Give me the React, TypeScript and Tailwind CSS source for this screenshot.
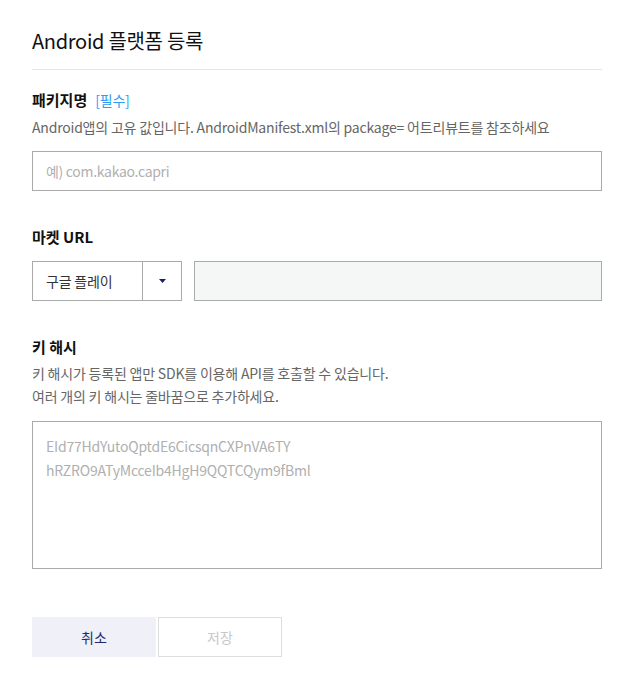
const font = { fontFamily: '"Noto Sans CJK KR", "Noto Sans", sans-serif' };

export default function App() {
  return (
    <div className="min-h-[676px] bg-white px-8 pt-[26px] text-[#222]" style={font}>
      <h1 className="text-[20px] leading-[30px] font-normal tracking-[-0.3px] text-[#111]">
        Android 플랫폼 등록
      </h1>
      <div className="mt-[13px] h-px w-[570px] bg-[#e5e5e5]" />

      <section className="mt-[19px]">
        <div className="flex items-baseline gap-[8px]">
          <span className="text-[15px] font-bold leading-[22px] text-[#111]">패키지명</span>
          <span className="text-[14px] tracking-[-0.2px] text-[#2e9cf2]">[필수]</span>
        </div>
        <p className="mt-[6px] text-[14px] leading-[20px] tracking-[-0.2px] text-[#666]">
          Android앱의 고유 값입니다. AndroidManifest.xml의 package= 어트리뷰트를 참조하세요
        </p>
        <input
          className="mt-[14px] h-[40px] w-[570px] border border-[#aaa] px-[13px] text-[14px] tracking-[-0.3px] outline-none placeholder:text-[#b0b0b0]"
          placeholder="예) com.kakao.capri"
        />
      </section>

      <section className="mt-[35px]">
        <div className="text-[15px] font-bold leading-[22px] text-[#111]">마켓 URL</div>
        <div className="mt-[13px] flex w-[570px] gap-[12px]">
          <div className="flex h-[40px] w-[150px] border border-[#aaa]">
            <span className="flex flex-1 items-center pl-[13px] text-[14px] tracking-[-0.2px] text-[#333]">구글 플레이</span>
            <span className="flex w-[39px] items-center justify-center border-l border-[#aaa]">
              <svg width="7" height="4" viewBox="0 0 7 4">
                <path d="M0 0h7L3.5 4z" fill="#1a1f6b" />
              </svg>
            </span>
          </div>
          <div className="h-[40px] flex-1 border border-[#aaa] bg-[#f5f7f7]" />
        </div>
      </section>

      <section className="mt-[35px]">
        <div className="text-[15px] font-bold leading-[22px] text-[#111]">키 해시</div>
        <p className="mt-[4px] text-[14px] leading-[23px] tracking-[-0.2px] text-[#666]">
          키 해시가 등록된 앱만 SDK를 이용해 API를 호출할 수 있습니다.
          <br />
          여러 개의 키 해시는 줄바꿈으로 추가하세요.
        </p>
        <textarea
          className="mt-[13px] block h-[148px] w-[570px] resize-none border border-[#aaa] px-[13px] py-[12px] text-[14px] leading-[24px] tracking-[-0.2px] outline-none placeholder:text-[#b0b0b0]"
          placeholder={'EId77HdYutoQptdE6CicsqnCXPnVA6TY\nhRZRO9ATyMcceIb4HgH9QQTCQym9fBml'}
        />
      </section>

      <div className="mt-[48px] flex gap-[2px]">
        <button className="h-[40px] w-[124px] bg-[#f0f1f8] text-[14px] text-[#1e2a6e]">취소</button>
        <button className="h-[40px] w-[124px] border border-[#ddd] bg-white text-[14px] text-[#c8c8c8]">저장</button>
      </div>
    </div>
  );
}
